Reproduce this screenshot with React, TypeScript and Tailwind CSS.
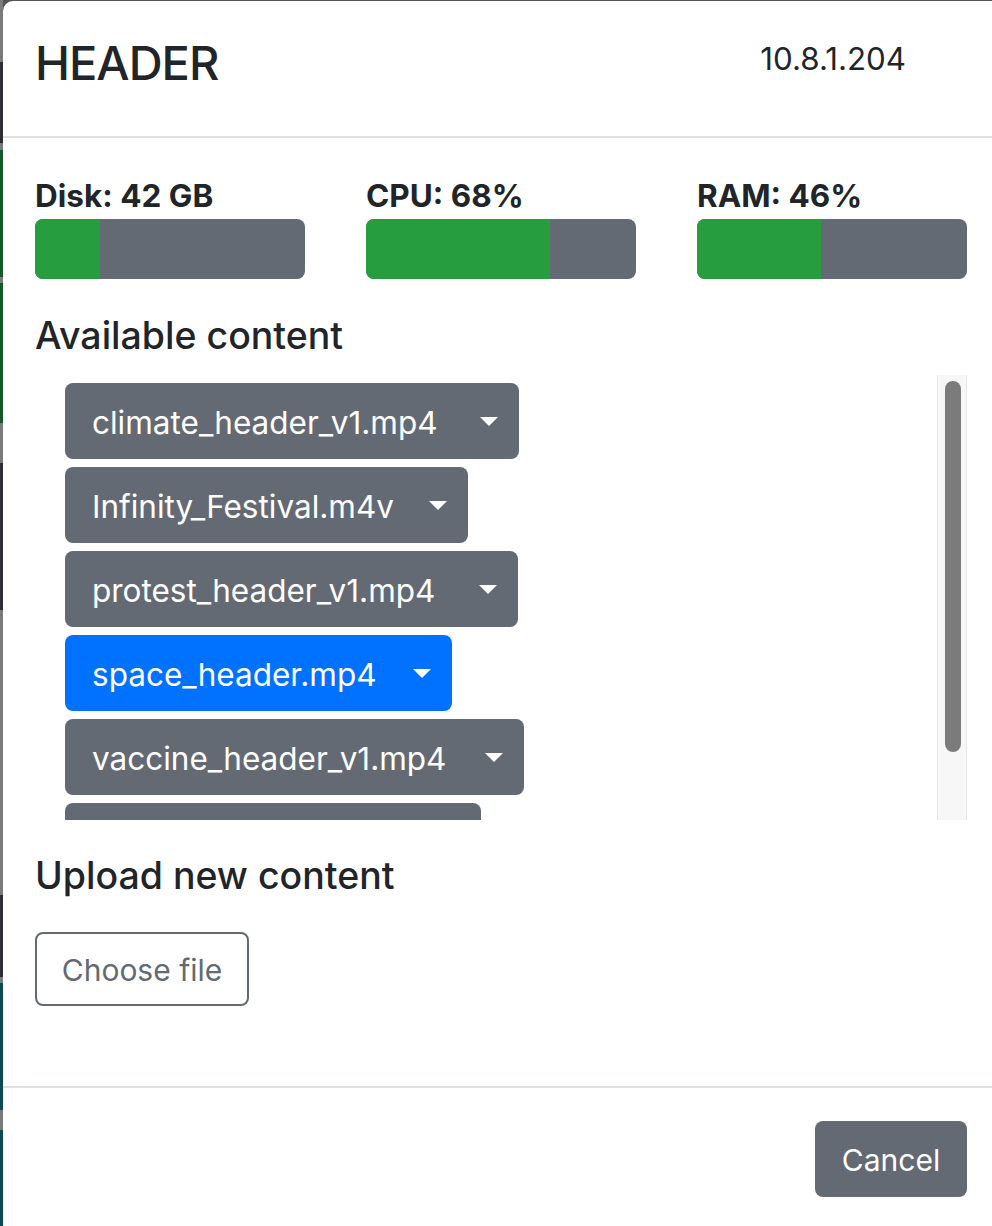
import React from "react";

const files = [
  { name: "climate_header_v1.mp4", cls: "w-[454px] bg-[#636a73]" },
  { name: "Infinity_Festival.m4v", cls: "w-[403px] bg-[#636a73]" },
  { name: "protest_header_v1.mp4", cls: "w-[453px] bg-[#636a73]" },
  { name: "space_header.mp4", cls: "w-[387px] bg-[#0072ff]" },
  { name: "vaccine_header_v1.mp4", cls: "w-[459px] bg-[#636a73]" },
];

const stats = [
  { label: "Disk: 42 GB", pct: 24 },
  { label: "CPU: 68%", pct: 68 },
  { label: "RAM: 46%", pct: 46 },
];

function Caret() {
  return <span className="block w-0 h-0 border-t-[9px] border-t-white border-x-[9px] border-x-transparent" />;
}

export default function App() {
  return (
    <div className="w-[992px] h-[1226px] overflow-hidden bg-[#555555] flex font-[Inter,sans-serif] text-[#212529]">
      <div className="w-[3px] flex flex-col shrink-0">
        <div className="h-[62px] bg-[#7a7a7a]" />
        <div className="h-[81px] bg-[#2c2e33]" />
        <div className="h-[7px] bg-[#7a7a7a]" />
        <div className="h-[127px] bg-[#15582a]" />
        <div className="h-[6px] bg-[#7a7a7a]" />
        <div className="h-[140px] bg-[#15582a]" />
        <div className="h-[40px] bg-[#7a7a7a]" />
        <div className="h-[147px] bg-[#2c2e33]" />
        <div className="h-[285px] bg-[#7a7a7a]" />
        <div className="h-[82px] bg-[#2c2e33]" />
        <div className="h-[6px] bg-[#7a7a7a]" />
        <div className="h-[127px] bg-[#0b4a55]" />
        <div className="h-[20px] bg-[#7a7a7a]" />
        <div className="flex-1 bg-[#0b4a55]" />
      </div>
      <div className="mt-[1px] w-[996px] shrink-0 bg-white rounded-tl-[10px] flex flex-col">
        {/* header */}
        <div className="h-[137px] border-b-2 border-[#dde1e5] flex items-start justify-between pl-[32px] pr-[93px] shrink-0">
          <div className="mt-[38px] text-[47px] leading-none font-medium tracking-[-1px]">HEADER</div>
          <div className="mt-[43px] text-[31.3px] leading-none">10.8.1.204</div>
        </div>
        {/* body */}
        <div className="px-[32px] flex flex-col pb-[80px]">
          <div className="mt-[42px] grid grid-cols-3 gap-x-[61px]">
            {stats.map((s) => (
              <div key={s.label} className="flex flex-col">
                <div className="text-[31.5px] leading-none font-bold">{s.label}</div>
                <div className="mt-[7.5px] h-[60px] rounded-[8px] bg-[#636a73] overflow-hidden flex">
                  <div className="h-full bg-[#269e3f]" style={{ width: `${s.pct}%` }} />
                </div>
              </div>
            ))}
          </div>
          <div className="mt-[38px] text-[37.5px] leading-none font-medium">Available content</div>
          <div className="mt-[20.5px] h-[445px] flex">
            <div className="flex-1 overflow-hidden pl-[30px] pt-[8px] flex flex-col items-start gap-[8px]">
              {files.map((f) => (
                <div
                  key={f.name}
                  className={`${f.cls} h-[76px] shrink-0 rounded-[8px] flex items-center justify-between pl-[27px] pr-[21px] text-white text-[31.5px]`}
                >
                  <span className="pt-[3px]">{f.name}</span>
                  <Caret />
                </div>
              ))}
              <div className="w-[416px] h-[76px] shrink-0 rounded-[8px] bg-[#636a73]" />
            </div>
            <div className="w-[30px] bg-[#f7f7f7] border-x border-[#e6e6e6] shrink-0">
              <div className="mt-[6px] ml-[7px] w-[16px] h-[371px] rounded-full bg-[#7b7b7b]" />
            </div>
          </div>
          <div className="mt-[37px] text-[37.5px] leading-none font-medium">Upload new content</div>
          <div className="mt-[37px] w-[214px] h-[74px] rounded-[8px] border-2 border-[#636a73] text-[#636a73] text-[30px] flex items-center justify-center pt-[3px]">
            Choose file
          </div>
        </div>
        {/* footer */}
        <div className="border-t-2 border-[#dde1e5] flex justify-end pr-[32px] pt-[33px]">
          <div className="w-[152px] h-[76px] rounded-[8px] bg-[#636a73] text-white text-[30px] flex items-center justify-center pt-[3px]">
            Cancel
          </div>
        </div>
      </div>
    </div>
  );
}
